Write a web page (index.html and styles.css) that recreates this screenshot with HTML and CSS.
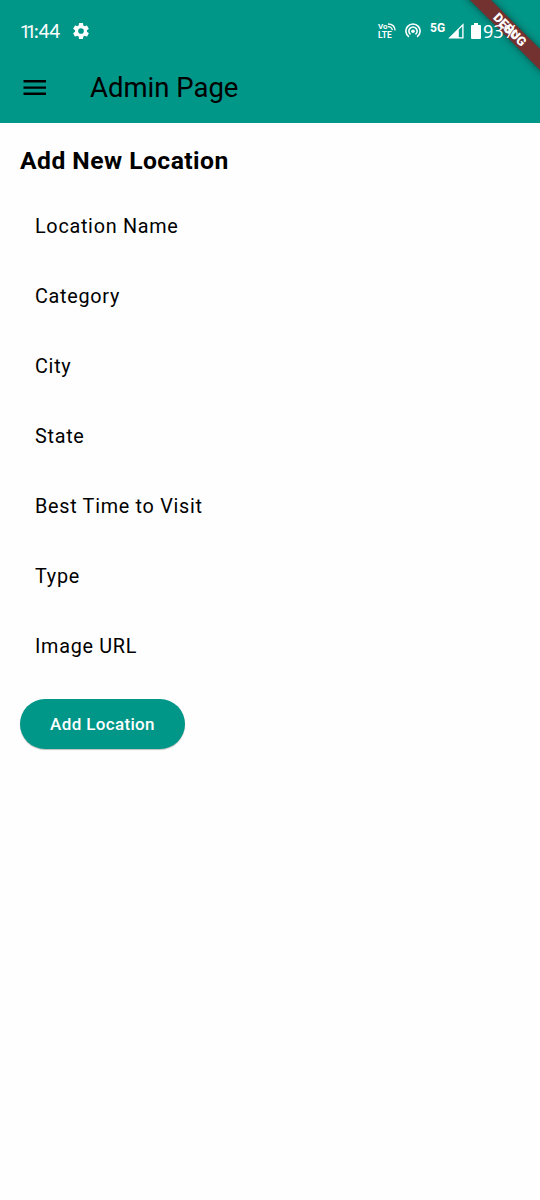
FILE: index.html
```
<!DOCTYPE html>
<html lang="en">
<head>
<meta charset="utf-8">
<title>Admin Page</title>
<link rel="stylesheet" href="styles.css">
</head>
<body>
<div class="screen">
  <header class="header">
    <div class="banner"><div class="ribbon">DEBUG</div></div>
    <div class="status-bar">
      <span class="clock"><span class="narrow">11</span>:44</span>
      <svg class="gear" width="20" height="20" viewBox="0 0 24 24"><path fill="#fff" d="M19.14 12.94c.04-.3.06-.61.06-.94 0-.32-.02-.64-.07-.94l2.03-1.58a.49.49 0 0 0 .12-.61l-1.92-3.32a.49.49 0 0 0-.59-.22l-2.39.96c-.5-.38-1.03-.7-1.62-.94l-.36-2.54a.48.48 0 0 0-.48-.41h-3.84c-.24 0-.43.17-.47.41l-.36 2.54c-.59.24-1.13.57-1.62.94l-2.39-.96a.48.48 0 0 0-.59.22L2.74 8.87a.47.47 0 0 0 .12.61l2.03 1.58c-.05.3-.09.63-.09.94s.02.64.07.94l-2.03 1.58a.49.49 0 0 0-.12.61l1.92 3.32c.12.22.37.29.59.22l2.39-.96c.5.38 1.03.7 1.62.94l.36 2.54c.05.24.24.41.48.41h3.84c.24 0 .44-.17.47-.41l.36-2.54c.59-.24 1.13-.56 1.62-.94l2.39.96c.22.08.47 0 .59-.22l1.92-3.32a.47.47 0 0 0-.12-.61zM12 15.4a3.4 3.4 0 1 1 0-6.8 3.4 3.4 0 0 1 0 6.8z"/></svg>
      <div class="indicators">
        <div class="volte">
          <div class="volte-top">Vo<svg width="8" height="8" viewBox="0 0 8 8" fill="none" stroke="#fff" stroke-width="1.3"><path d="M0 1Q6.6 1 7.1 7.4M0 3.6Q3.8 3.8 4.4 7.2"/></svg></div>
          <div>LTE</div>
        </div>
        <svg class="hotspot" width="16" height="16" viewBox="0 0 16 16" fill="none" stroke="#fff" stroke-width="1.6"><path d="M3.9 13.9a7.1 7.1 0 1 1 8.2 0M5.5 11.4a4.1 4.1 0 1 1 5 0"/><circle cx="8" cy="8.3" r="1.8" fill="#fff" stroke="none"/></svg>
        <span class="network">5G</span>
        <svg class="signal" width="16" height="16" viewBox="0 0 16 16"><path fill="#fff" fill-rule="evenodd" d="M15.6.2V15.6H.2ZM10.8 6.8V14.2H14.2V3.4Z"/></svg>
        <svg class="battery" width="10" height="16" viewBox="0 0 10 16"><path fill="#fff" d="M3 0h4v2h2q1 0 1 1v12q0 1-1 1H1q-1 0-1-1V3q0-1 1-1h2z"/></svg>
        <span class="percent">93%</span>
      </div>
    </div>
    <div class="app-bar">
      <svg class="menu" width="24" height="16" viewBox="0 0 24 16"><path fill="#000" d="M.5 0h22.5v2.5H.5zM.5 6.4h22.5v2.4H.5zM.5 12.6h22.5v2.4H.5z"/></svg>
      <h1 class="title">Admin Page</h1>
    </div>
  </header>
  <main class="content">
    <h2 class="heading">Add New Location</h2>
    <form class="form">
      <div class="field">Location Name</div>
      <div class="field">Category</div>
      <div class="field">City</div>
      <div class="field">State</div>
      <div class="field">Best Time to Visit</div>
      <div class="field">Type</div>
      <div class="field">Image URL</div>
      <button class="submit" type="button">Add Location</button>
    </form>
  </main>
</div>
</body>
</html>
```
FILE: styles.css
```
* { box-sizing: border-box; }
body { margin: 0; background: #fefefe; color: #000; font-family: Roboto, "Liberation Sans", sans-serif; }
.screen { position: relative; width: 540px; height: 1200px; overflow: hidden; }
.header { height: 123px; background: #009688; }
.status-bar { position: relative; z-index: 2; display: flex; align-items: center; height: 63px; padding-left: 20px; color: #fff; }
.clock { width: 41px; font: 500 18.5px/20px Lato, sans-serif; letter-spacing: 0; white-space: nowrap; }
.narrow { font-family: Roboto, sans-serif; font-weight: 400; letter-spacing: -4.5px; margin-right: 2.2px; }
.gear { margin: -1px 0 0 10px; }
.indicators { display: flex; align-items: center; margin-left: auto; width: 162px; height: 20px; }
.volte { width: 19px; margin-top: -1px; font: 700 8.5px/8px Roboto, sans-serif; }
.volte-top { display: flex; align-items: center; font-size: 8px; }
.hotspot { margin: -1px 0 0 8px; }
.network { margin: -8px 0 0 9px; width: 16px; font: 700 12px/14px Roboto, sans-serif; }
.signal { margin: -1px 0 0 2px; }
.battery { margin: -1px 0 0 7px; }
.percent { margin: -1px 0 0 2px; font: 400 18px/20px "Noto Sans", sans-serif; }
.app-bar { display: flex; align-items: center; height: 50px; padding-left: 23px; }
.menu { display: block; }
.title { margin: -2px 0 0 43px; font-size: 27.5px; line-height: 35px; font-weight: 400; }
.banner { position: absolute; top: 0; right: 0; width: 120px; height: 120px; overflow: hidden; z-index: 1; }
.ribbon { position: absolute; left: 35.3px; top: 22.2px; width: 110px; height: 15px; transform: rotate(45deg); background: #73312f; box-shadow: 0 0 7.5px rgba(0, 0, 0, .5); color: #fff; font-size: 12.75px; line-height: 15px; font-weight: 900; text-align: center; }
.content { padding: 20px; }
.heading { margin: 0; font-size: 24.7px; line-height: 36px; font-weight: 700; letter-spacing: .45px; }
.form { padding-top: 12px; }
.field { display: flex; align-items: center; height: 70px; padding-left: 15px; font-size: 19.8px; letter-spacing: .72px; }
.submit { display: block; width: 165px; height: 50px; margin-top: 18px; padding: 0; border: 0; border-radius: 25px; background: #009688; box-shadow: 0 1px 1px rgba(0, 0, 0, .25); color: #fff; font: 500 17px/25px Roboto, sans-serif; letter-spacing: .35px; }
```
